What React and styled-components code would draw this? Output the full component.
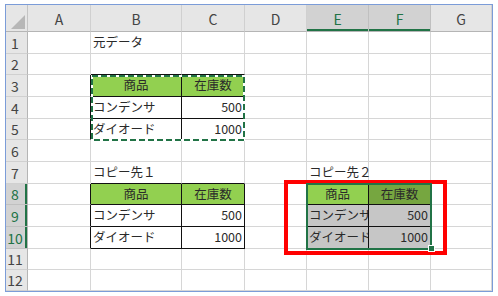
import React from 'react';
import styled, { createGlobalStyle } from 'styled-components';

const GlobalStyle = createGlobalStyle`
  html, body { margin: 0; padding: 0; background: #fff; }
  body { font-family: "Noto Sans CJK JP", "Noto Sans", sans-serif; }
`;

const COLS = ['A', 'B', 'C', 'D', 'E', 'F', 'G'];
const COL_W = [63, 91, 63, 62, 62, 62, 61];
const ROW_H = [22, 21, 22, 22, 21, 22, 22, 21, 22, 22, 21, 21];

const GREEN = '#217346';
const GRID = '#d6d6d6';

const headRow = (t1, t2) => ({ t: t1, head: true }, { t: t2, head: true });

const DATA = {
  B1: { t: '元データ' },
  B3: { t: '商品', head: true }, C3: { t: '在庫数', head: true },
  B4: { t: 'コンデンサ' }, C4: { t: '500', num: true },
  B5: { t: 'ダイオード' }, C5: { t: '1000', num: true },
  B7: { t: 'コピー先１' },
  B8: { t: '商品', head: true }, C8: { t: '在庫数', head: true },
  B9: { t: 'コンデンサ' }, C9: { t: '500', num: true },
  B10: { t: 'ダイオード' }, C10: { t: '1000', num: true },
  E7: { t: 'コピー先２' },
  E8: { t: '商品', head: true }, F8: { t: '在庫数', head: true },
  E9: { t: 'コンデンサ' }, F9: { t: '500', num: true },
  E10: { t: 'ダイオード' }, F10: { t: '1000', num: true },
};

const TABLES = [
  { c1: 2, c2: 3, r1: 3, r2: 5 },
  { c1: 2, c2: 3, r1: 8, r2: 10 },
  { c1: 5, c2: 6, r1: 8, r2: 10 },
];
const SEL = { c1: 5, c2: 6, r1: 8, r2: 10 };
const ACTIVE = { c: 5, r: 8 };

const inRange = (g, r, c) => r >= g.r1 && r <= g.r2 && c >= g.c1 && c <= g.c2;
const inTable = (r, c) => TABLES.some((t) => inRange(t, r, c));
const cellAt = (r, c) => DATA[`${COLS[c - 1]}${r}`];

const Frame = styled.div`
  margin: 4px 0 0 5px;
  width: 486px;
  border: 1px solid #7b9cd8;
`;

const Sheet = styled.div`
  display: grid;
  grid-template-columns: 22px ${COL_W.map((w) => `${w}px`).join(' ')};
  grid-template-rows: 27px ${ROW_H.map((h) => `${h}px`).join(' ')};
  font-family: "Noto Sans CJK JP", "Noto Sans", sans-serif;
`;

const Corner = styled.div`
  grid-row: 1;
  grid-column: 1;
  box-sizing: border-box;
  background: #e6e6e6;
  border-right: 1px solid #c4c4c4;
  border-bottom: 1px solid #b5b5b5;
  display: flex;
  align-items: flex-end;
  justify-content: flex-end;
  padding: 0 2px 2px 0;
  &::after {
    content: '';
    width: 14px;
    height: 14px;
    background: #b7b7b7;
    clip-path: polygon(100% 0, 100% 100%, 0 100%);
  }
`;

const ColHead = styled.div`
  grid-row: 1;
  grid-column: ${(p) => p.$c + 1};
  box-sizing: border-box;
  background: ${(p) => (p.$sel ? '#d2d2d2' : '#e6e6e6')};
  border-right: 1px solid ${(p) => (p.$sel ? '#c0c0c0' : '#d0d0d0')};
  border-bottom: 1px solid #b5b5b5;
  box-shadow: ${(p) => (p.$sel ? `inset 0 -2px 0 ${GREEN}` : 'none')};
  color: ${(p) => (p.$sel ? GREEN : '#444')};
  font-size: 14px;
  display: flex;
  align-items: center;
  justify-content: center;
  padding-top: 2px;
`;

const RowHead = styled.div`
  grid-row: ${(p) => p.$r + 1};
  grid-column: 1;
  box-sizing: border-box;
  background: ${(p) => (p.$sel ? '#d2d2d2' : '#e6e6e6')};
  border-right: 1px solid #b5b5b5;
  border-bottom: 1px solid ${(p) => (p.$sel ? '#c0c0c0' : '#d0d0d0')};
  box-shadow: ${(p) => (p.$sel ? `inset -2px 0 0 ${GREEN}` : 'none')};
  color: ${(p) => (p.$sel ? GREEN : '#444')};
  font-size: 14px;
  display: flex;
  align-items: center;
  justify-content: center;
  padding-right: 3px;
`;

const Cell = styled.div`
  grid-row: ${(p) => p.$r + 1};
  grid-column: ${(p) => p.$c + 1};
  box-sizing: border-box;
  min-width: 0;
  border-right: 1px solid ${(p) => p.$rb};
  border-bottom: 1px solid ${(p) => p.$bb};
  background: ${(p) => p.$bg || 'transparent'};
  display: flex;
  align-items: center;
  justify-content: ${(p) => (p.$align === 'right' ? 'flex-end' : p.$align === 'center' ? 'center' : 'flex-start')};
  padding: 0 2px;
  font-size: 12.5px;
  line-height: 1;
  color: #2a2a2a;
  white-space: nowrap;
  overflow: ${(p) => (p.$clip ? 'hidden' : 'visible')};
`;

const Overlay = styled.div`
  grid-row: ${(p) => p.$r1 + 1} / ${(p) => p.$r2 + 2};
  grid-column: ${(p) => p.$c1 + 1} / ${(p) => p.$c2 + 2};
  position: relative;
  z-index: 2;
  pointer-events: none;
`;

const Marquee = styled.svg`
  position: absolute;
  left: 0;
  top: 0;
  overflow: visible;
`;

const SelBox = styled.div`
  position: absolute;
  inset: -1px;
  border: 2px solid ${GREEN};
`;

const Handle = styled.div`
  position: absolute;
  right: -4px;
  bottom: -3px;
  width: 5px;
  height: 5px;
  background: ${GREEN};
  border: 1px solid #fff;
`;

const RedBox = styled.div`
  position: absolute;
  top: -4px;
  left: -23px;
  right: -16px;
  bottom: -6px;
  border: 4px solid #ff0000;
`;

function fillFor(r, c, cell) {
  const base = cell && cell.head ? '#92d050' : null;
  const selected = inRange(SEL, r, c) && !(r === ACTIVE.r && c === ACTIVE.c);
  if (selected) return base ? '#76a640' : '#c6c6c6';
  return base;
}

export default function App() {
  const rows = ROW_H.map((_, i) => i + 1);
  const cols = COLS.map((_, i) => i + 1);
  return (
    <>
      <GlobalStyle />
      <Frame>
        <Sheet>
          <Corner />
          {COLS.map((l, i) => (
            <ColHead key={l} $c={i + 1} $sel={i + 1 >= SEL.c1 && i + 1 <= SEL.c2}>
              {l}
            </ColHead>
          ))}
          {rows.map((r) => (
            <RowHead key={`rh${r}`} $r={r} $sel={r >= SEL.r1 && r <= SEL.r2}>
              {r}
            </RowHead>
          ))}
          {rows.map((r) =>
            cols.map((c) => {
              const cell = cellAt(r, c);
              const rb = inTable(r, c) || inTable(r, c + 1) ? '#111' : GRID;
              const bb = inTable(r, c) || inTable(r + 1, c) ? '#111' : GRID;
              const align = cell ? (cell.head ? 'center' : cell.num ? 'right' : 'left') : 'left';
              return (
                <Cell
                  key={`${r}-${c}`}
                  $r={r}
                  $c={c}
                  $rb={rb}
                  $bb={bb}
                  $bg={fillFor(r, c, cell)}
                  $align={align}
                  $clip={!!cellAt(r, c + 1)}
                >
                  {cell ? cell.t : null}
                </Cell>
              );
            })
          )}
          <Overlay $r1={3} $r2={5} $c1={2} $c2={3}>
            <Marquee width="154" height="65">
              <rect x="1" y="1" width="152" height="64" fill="none" stroke="#fff" strokeWidth="2" />
              <rect x="1" y="1" width="152" height="64" fill="none" stroke={GREEN} strokeWidth="2" strokeDasharray="6 3" />
            </Marquee>
          </Overlay>
          <Overlay $r1={SEL.r1} $r2={SEL.r2} $c1={SEL.c1} $c2={SEL.c2}>
            <RedBox />
            <SelBox />
            <Handle />
          </Overlay>
        </Sheet>
      </Frame>
    </>
  );
}
